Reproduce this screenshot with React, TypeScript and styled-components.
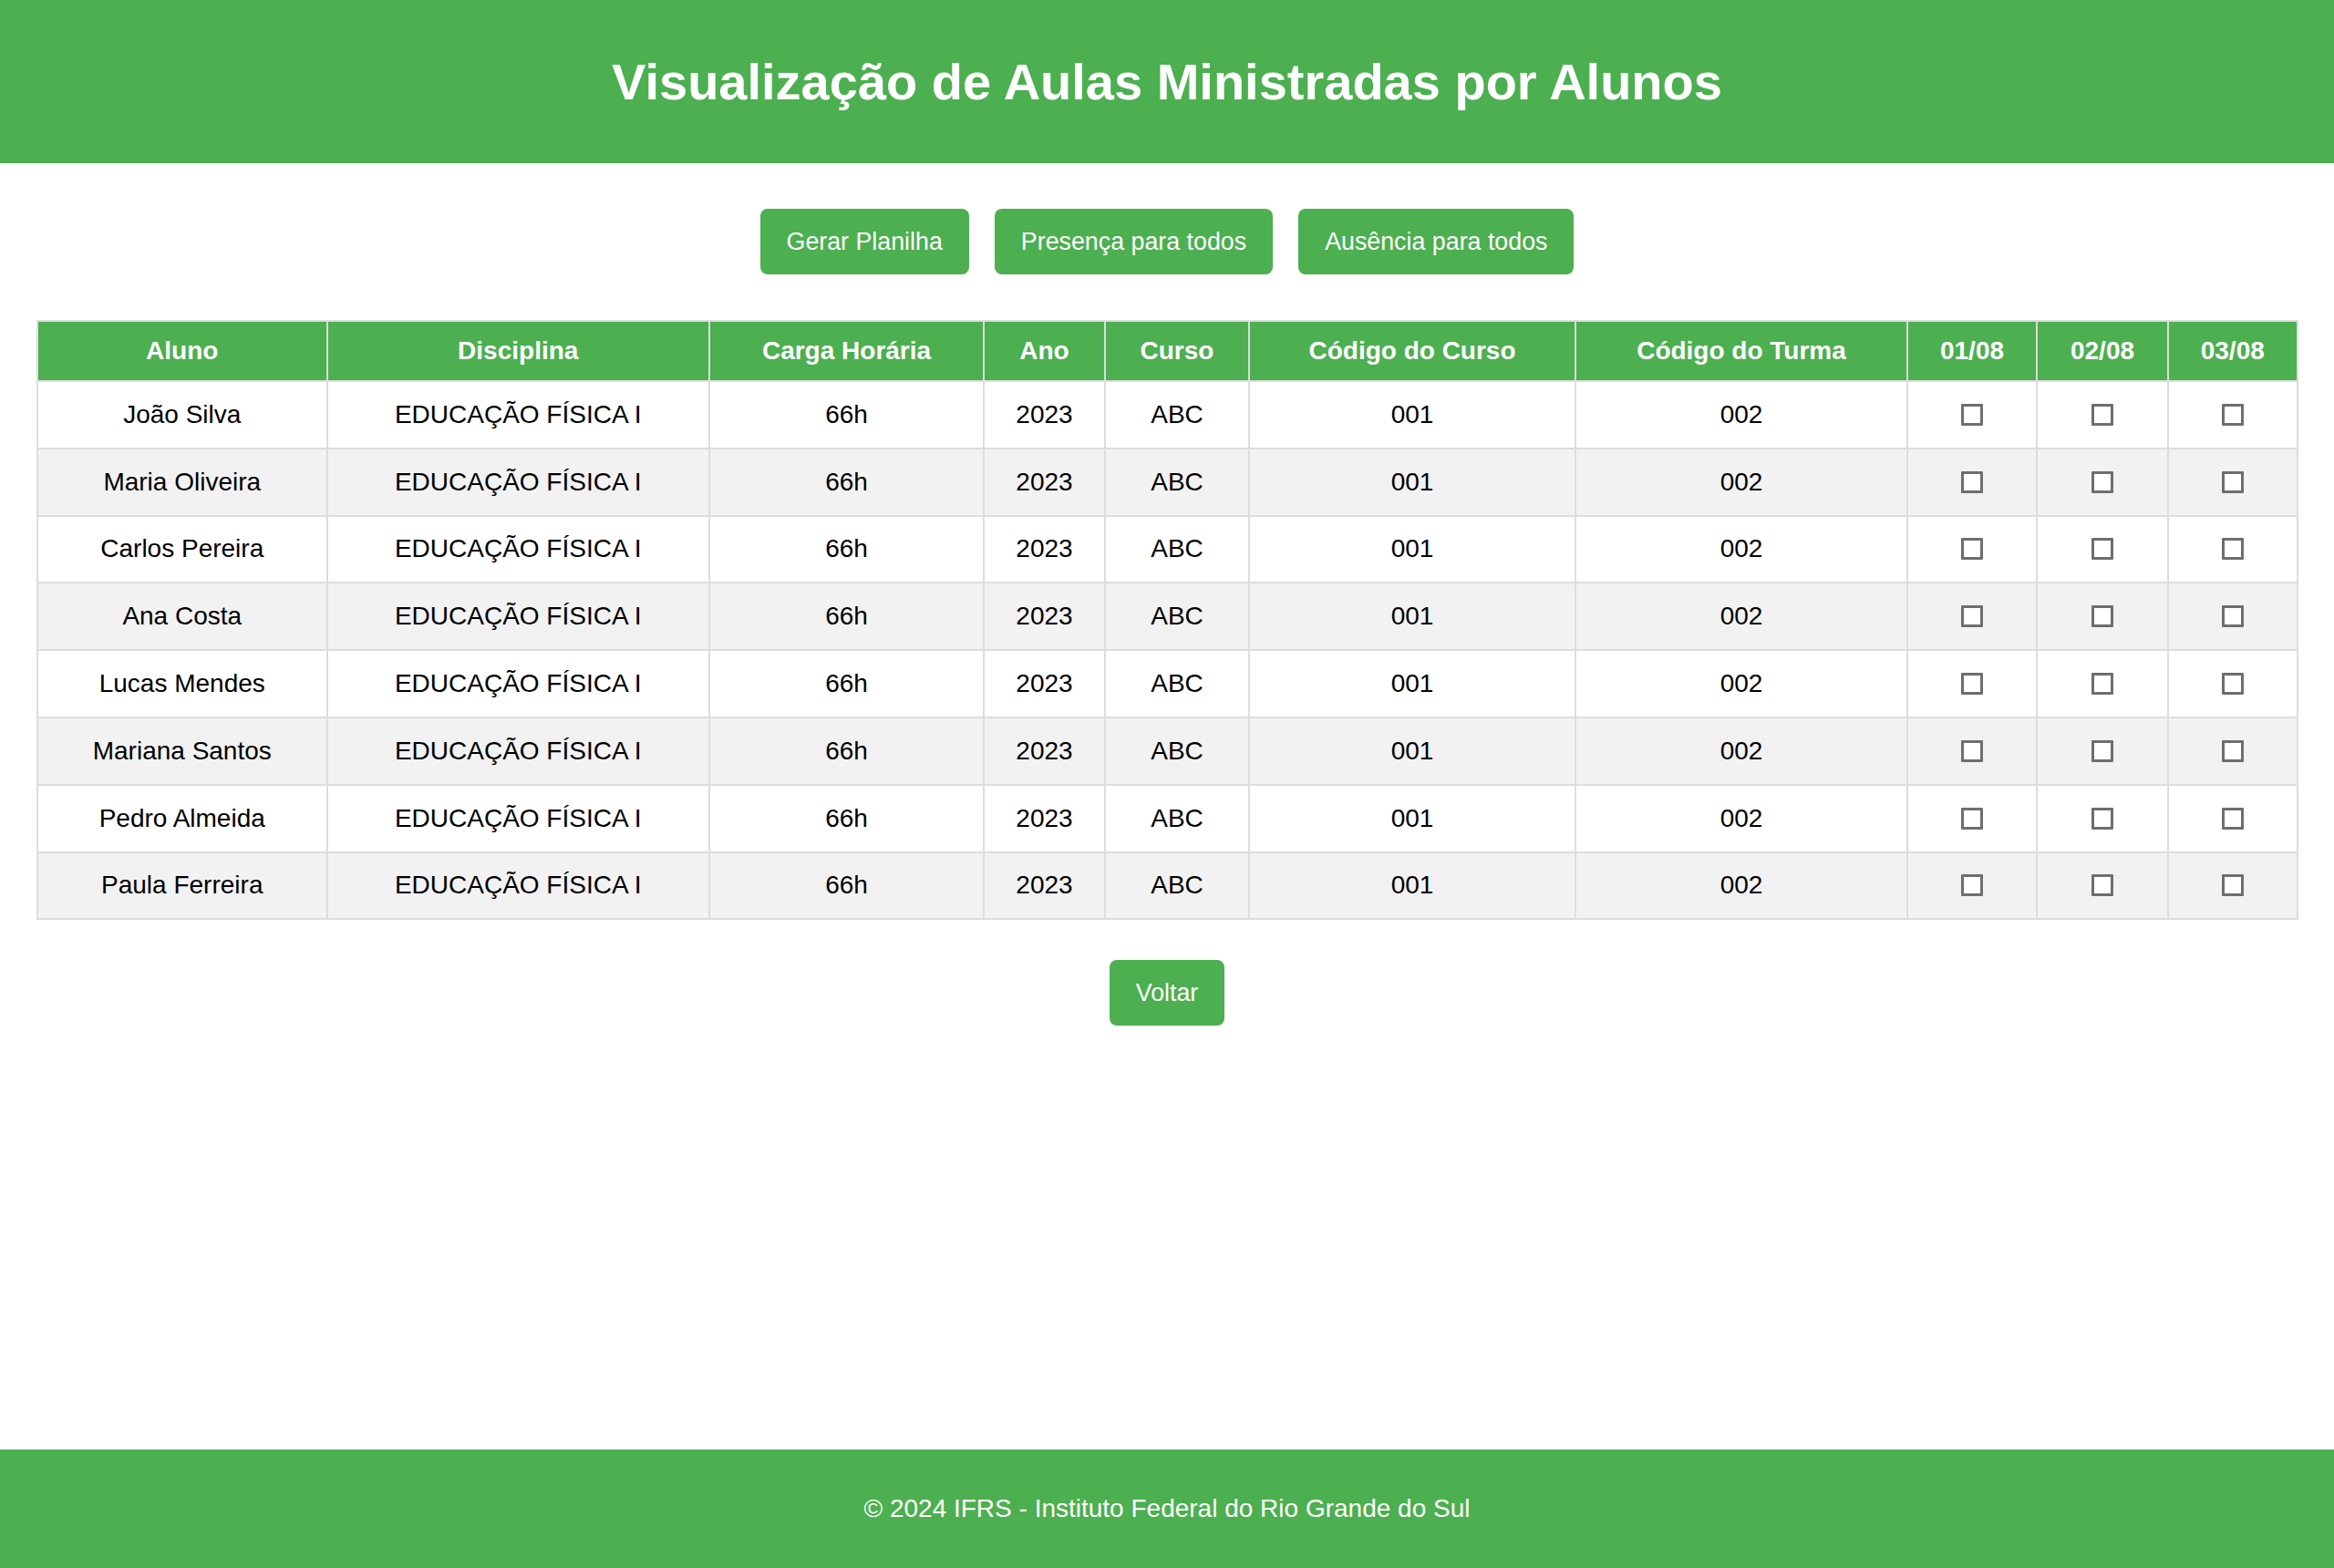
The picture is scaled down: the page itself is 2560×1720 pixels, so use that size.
import React from "react";
import styled, { createGlobalStyle } from "styled-components";

const GlobalStyle = createGlobalStyle`
  html, body {
    margin: 0;
    padding: 0;
    background: #ffffff;
    font-family: "Liberation Sans", Arial, sans-serif;
  }
  * { box-sizing: border-box; }
`;

const GREEN = "#4CAF50";

const Page = styled.div`
  display: flex;
  flex-direction: column;
  min-height: 100vh;
`;

const Header = styled.header`
  background: ${GREEN};
  padding: 57px 0;
  text-align: center;
`;

const Title = styled.h1`
  margin: 0;
  color: #ffffff;
  font-size: 56px;
  line-height: 65px;
  font-weight: 700;
`;

const Toolbar = styled.div`
  display: flex;
  justify-content: center;
  gap: 28px;
  margin: 50px 0;
`;

const Button = styled.button`
  height: 72px;
  padding: 0 29px;
  border: none;
  border-radius: 8px;
  background: ${GREEN};
  color: #ffffff;
  font-family: "Liberation Sans", Arial, sans-serif;
  font-size: 26.8px;
  cursor: pointer;
`;

const TableWrap = styled.div`
  padding: 0 40px;
`;

const Table = styled.table`
  width: 100%;
  table-layout: fixed;
  border-collapse: collapse;
  font-size: 28px;
  color: #000000;
`;

const Th = styled.th`
  height: 66px;
  padding: 0 8px;
  background: ${GREEN};
  color: #ffffff;
  font-weight: 700;
  text-align: center;
  border: 2px solid #dddddd;
`;

const Row = styled.tr<{ $alt: boolean }>`
  background: ${(p) => (p.$alt ? "#f2f2f2" : "#ffffff")};
`;

const Td = styled.td`
  height: 73.8px;
  padding: 0 8px;
  text-align: center;
  vertical-align: middle;
  border: 2px solid #dddddd;
`;

const Check = styled.input`
  appearance: none;
  -webkit-appearance: none;
  display: block;
  width: 24px;
  height: 24px;
  margin: 0 auto;
  border: 3px solid #6e6e6e;
  border-radius: 1px;
  background: #ffffff;
`;

const BackBar = styled.div`
  display: flex;
  justify-content: center;
  margin-top: 44px;
`;

const Footer = styled.footer`
  margin-top: auto;
  height: 130px;
  background: ${GREEN};
  color: #ffffff;
  display: flex;
  align-items: center;
  justify-content: center;
  font-size: 28px;
`;

const columns: { label: string; width: number }[] = [
  { label: "Aluno", width: 317.5 },
  { label: "Disciplina", width: 419.5 },
  { label: "Carga Horária", width: 301 },
  { label: "Ano", width: 133 },
  { label: "Curso", width: 158 },
  { label: "Código do Curso", width: 358 },
  { label: "Código do Turma", width: 364 },
  { label: "01/08", width: 142 },
  { label: "02/08", width: 144 },
  { label: "03/08", width: 141.5 },
];

const students = [
  "João Silva",
  "Maria Oliveira",
  "Carlos Pereira",
  "Ana Costa",
  "Lucas Mendes",
  "Mariana Santos",
  "Pedro Almeida",
  "Paula Ferreira",
];

export default function App() {
  return (
    <Page>
      <GlobalStyle />
      <Header>
        <Title>Visualização de Aulas Ministradas por Alunos</Title>
      </Header>
      <Toolbar>
        <Button>Gerar Planilha</Button>
        <Button>Presença para todos</Button>
        <Button>Ausência para todos</Button>
      </Toolbar>
      <TableWrap>
        <Table>
          <colgroup>
            {columns.map((c) => (
              <col key={c.label} style={{ width: c.width }} />
            ))}
          </colgroup>
          <thead>
            <tr>
              {columns.map((c) => (
                <Th key={c.label}>{c.label}</Th>
              ))}
            </tr>
          </thead>
          <tbody>
            {students.map((name, i) => (
              <Row key={name} $alt={i % 2 === 1}>
                <Td>{name}</Td>
                <Td>EDUCAÇÃO FÍSICA I</Td>
                <Td>66h</Td>
                <Td>2023</Td>
                <Td>ABC</Td>
                <Td>001</Td>
                <Td>002</Td>
                <Td><Check type="checkbox" /></Td>
                <Td><Check type="checkbox" /></Td>
                <Td><Check type="checkbox" /></Td>
              </Row>
            ))}
          </tbody>
        </Table>
      </TableWrap>
      <BackBar>
        <Button>Voltar</Button>
      </BackBar>
      <Footer>© 2024 IFRS - Instituto Federal do Rio Grande do Sul</Footer>
    </Page>
  );
}
